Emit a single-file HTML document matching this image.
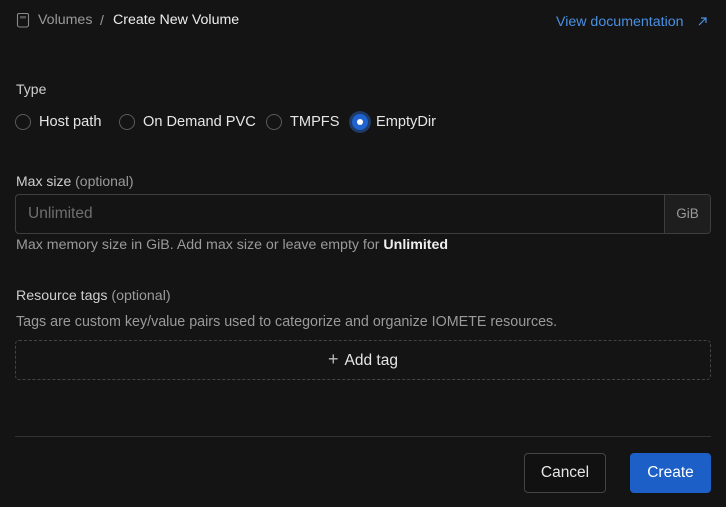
<!DOCTYPE html>
<html><head><style>
*{box-sizing:border-box;margin:0;padding:0}
body{width:726px;height:507px;background:#141414;font-family:"Liberation Sans",sans-serif;color:#e6e6e6;position:relative;overflow:hidden;font-size:14px}
.a{position:absolute;white-space:nowrap}
.radio{position:absolute;width:16px;height:16px;border:1px solid #5a5a5a;border-radius:50%;top:114px}
.muted{color:#9a9a9a}
.lbl{font-size:14.6px;top:114px}
</style></head><body>
<svg class="a" style="left:16px;top:12px" width="14" height="16" viewBox="0 0 14 16"><path d="M3 1.5h8a1.5 1.5 0 0 1 1.5 1.5v10a2 2 0 0 1-2 2h-7a2 2 0 0 1-2-2V3A1.5 1.5 0 0 1 3 1.5zM5 4v2.5M7 4v2.5M9 4v2.5" fill="none" stroke="#8a8a8a" stroke-width="1.1"/></svg>
<div class="a muted" style="left:38px;top:12px;font-size:14.2px">Volumes</div>
<div class="a muted" style="left:100px;top:12px">/</div>
<div class="a" style="left:113px;top:12px;color:#eee;font-size:14.2px">Create New Volume</div>
<div class="a" style="left:556px;top:14px;color:#4a90e2;font-size:14.2px">View documentation</div>
<svg class="a" style="left:697px;top:16px" width="11" height="11" viewBox="0 0 11 11"><path d="M2 9L9 2M4 2h5v5" fill="none" stroke="#4a90e2" stroke-width="1.2"/></svg>
<div class="a" style="left:16px;top:81px;color:#cfcfcf">Type</div>
<div class="radio" style="left:15px"></div><div class="a lbl" style="left:39px">Host path</div>
<div class="radio" style="left:119px"></div><div class="a lbl" style="left:143px">On Demand PVC</div>
<div class="radio" style="left:266px"></div><div class="a lbl" style="left:290px">TMPFS</div>
<div class="a" style="left:349px;top:111px;width:22px;height:22px;border-radius:50%;background:#1e3a66"></div>
<div class="a" style="left:352px;top:114px;width:16px;height:16px;border-radius:50%;background:#1f63d1"></div>
<div class="a" style="left:357px;top:119px;width:6px;height:6px;border-radius:50%;background:#fff"></div>
<div class="a lbl" style="left:376px">EmptyDir</div>
<div class="a" style="left:16px;top:173px;color:#cfcfcf">Max size <span class="muted">(optional)</span></div>
<div class="a" style="left:15px;top:194px;width:696px;height:40px;border:1px solid #3e3e3e;border-radius:4px;background:#141414"></div>
<div class="a" style="left:664px;top:195px;width:46px;height:38px;border-left:1px solid #3e3e3e;background:#1e1e1e;border-radius:0 3px 3px 0;color:#9a9a9a;font-size:13.5px;text-align:center;line-height:38px">GiB</div>
<div class="a" style="left:28px;top:205px;color:#6f6f6f;font-size:15.5px">Unlimited</div>
<div class="a muted" style="left:16px;top:237px;font-size:14.2px">Max memory size in GiB. Add max size or leave empty for <b style="color:#eee">Unlimited</b></div>
<div class="a" style="left:16px;top:288px;color:#cfcfcf;font-size:14.2px">Resource tags <span class="muted">(optional)</span></div>
<div class="a muted" style="left:16px;top:314px;font-size:14.3px">Tags are custom key/value pairs used to categorize and organize IOMETE resources.</div>
<div class="a" style="left:15px;top:340px;width:696px;height:40px;border:1px dashed #444;border-radius:4px;text-align:center;line-height:37px;font-size:15.5px;color:#e6e6e6"><span style="font-size:18px;font-weight:300;margin-right:6px;color:#bbb">+</span>Add tag</div>
<div class="a" style="left:15px;top:436px;width:696px;height:1px;background:#333"></div>
<div class="a" style="left:524px;top:453px;width:82px;height:40px;border:1px solid #444;border-radius:4px;background:#111;text-align:center;line-height:38px;font-size:15.5px">Cancel</div>
<div class="a" style="left:630px;top:453px;width:81px;height:40px;border-radius:4px;background:#1b5fc7;text-align:center;line-height:39px;font-size:15.5px;color:#fff">Create</div>
</body></html>
